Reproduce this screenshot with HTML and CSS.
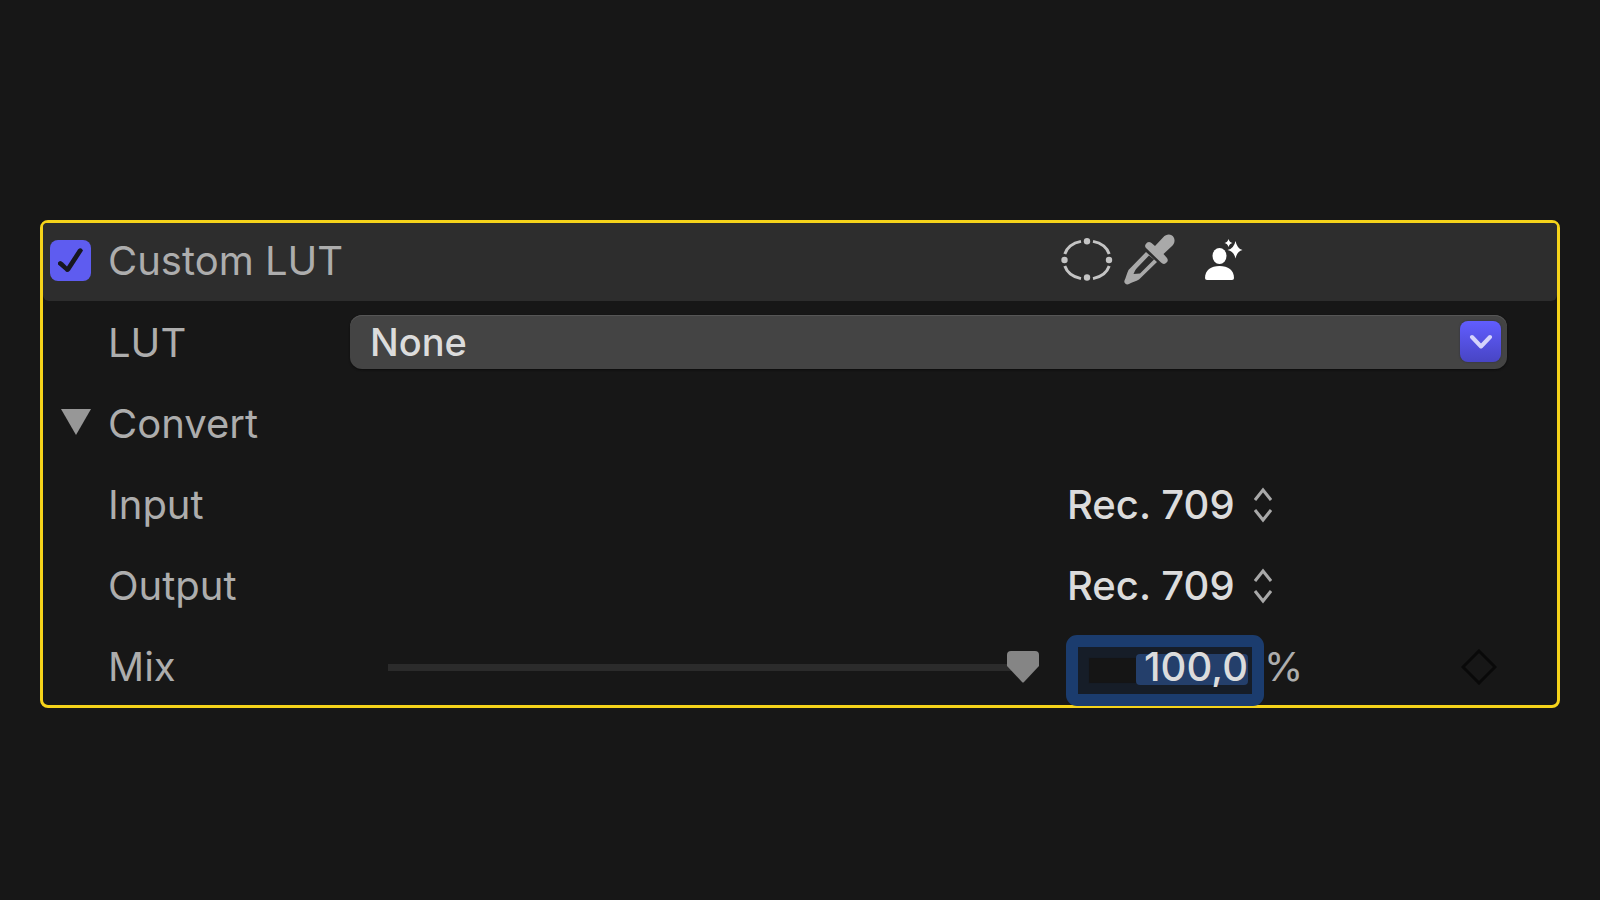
FILE: index.html
```
<!DOCTYPE html>
<html lang="en">
<head>
    <meta charset="utf-8">
    <title>Custom LUT</title>
    <link rel="stylesheet" href="styles.css">
</head>
<body>
    <div class="effect">
        <div class="row header">
            <input type="checkbox" id="enabled" checked>
            <label class="title" for="enabled">Custom LUT</label>
            <div class="tools">
                <button aria-label="Shape mask">
                    <svg width="52" height="44" viewBox="0 0 52 44" fill="none" stroke="#c4c4c4" stroke-width="3">
                        <path d="M20 3.4C12 5 6 9.5 3.8 16M32 3.4C40 5 46 9.5 48.2 16M3.8 28C6 34.500 12 39 20 40.600M48.2 28C46 34.500 40 39 32 40.600"/>
                        <g fill="#c4c4c4" stroke="none">
                            <circle cx="26" cy="3.300" r="3.200"/>
                            <circle cx="26" cy="39.500" r="3.200"/>
                            <circle cx="3.500" cy="22" r="3.200"/>
                            <circle cx="48" cy="22" r="3.200"/>
                        </g>
                    </svg>
                </button>
                <button aria-label="Color mask">
                    <svg width="52" height="52" viewBox="0 0 52 52" fill="#a9a9a9">
                        <path fill-rule="evenodd" d="M22 18L4.500 36C2.500 40 2 44 .5 46.500C-.5 49 2.500 51.500 5 50C8 48 12 47.500 15 45.500L33 28ZM25 21.500L13 34C11 36 10.500 38 9.500 40L16 39.500L30 25.500Z"/>
                        <path d="M21.500 10.500Q24 6.500 27.500 9L31 12L39 3.500C43 -1 48 .5 49.500 3C51.500 6 50.500 10 47.500 12.500L39.500 20L43 24Q45 27 42 29Q39.500 31 37 28.500L22 14Q20.500 12.500 21.500 10.500Z"/>
                    </svg>
                </button>
                <button class="person" aria-label="Magnetic mask">
                    <svg width="40" height="44" viewBox="0 0 40 44" fill="#fff">
                        <ellipse cx="14.500" cy="18" rx="7" ry="8"/>
                        <path d="M0 40C0 32 6 28 14.500 28S29 32 29 40Q29 42 27 42H2Q0 42 0 40Z"/>
                        <path d="M30.500 3Q32 10.500 37.500 12Q32 13.500 30.500 20.500Q29 13.500 22.500 12Q29 10.500 30.500 3Z"/>
                        <path d="M23.500 1Q24.500 4.500 27.500 5Q24.500 5.500 23.500 9Q22.500 5.500 19.500 5Q22.500 4.500 23.500 1Z"/>
                    </svg>
                </button>
            </div>
        </div>

        <div class="row">
            <label class="name" for="lut">LUT</label>
            <div class="popup">
                <select id="lut">
                    <option>None</option>
                </select>
                <span class="arrow">
                    <svg width="24" height="16" viewBox="0 0 24 16" fill="none" stroke="#d5d3fb" stroke-width="4" stroke-linecap="round" stroke-linejoin="round">
                        <path d="M3 4L12 13.500L21 4"/>
                    </svg>
                </span>
            </div>
        </div>

        <div class="row">
            <button class="disclosure" aria-label="Toggle Convert" aria-expanded="true">
                <svg width="30" height="26" viewBox="0 0 30 26" fill="#979797">
                    <path d="M0 0H30L15 26Z"/>
                </svg>
            </button>
            <span class="name">Convert</span>
        </div>

        <div class="row">
            <label class="name" for="input">Input</label>
            <div class="value">
                <select id="input">
                    <option>Rec. 709</option>
                </select>
                <svg width="18" height="36" viewBox="0 0 18 36" fill="none" stroke="#a8a8a8" stroke-width="3">
                    <path d="M1 13L9 3L17 13M1 23L9 33L17 23"/>
                </svg>
            </div>
        </div>

        <div class="row">
            <label class="name" for="output">Output</label>
            <div class="value">
                <select id="output">
                    <option>Rec. 709</option>
                </select>
                <svg width="18" height="36" viewBox="0 0 18 36" fill="none" stroke="#a8a8a8" stroke-width="3">
                    <path d="M1 13L9 3L17 13M1 23L9 33L17 23"/>
                </svg>
            </div>
        </div>

        <div class="row mix">
            <label class="name" for="mix">Mix</label>
            <input type="range" id="mix" min="0" max="100" value="100">
            <div class="value">
                <div class="field">
                    <input type="text" aria-label="Mix amount" value="100,0">
                </div>
                <span class="unit">%</span>
                <button class="keyframe" aria-label="Add keyframe">
                    <svg width="36" height="36" viewBox="0 0 36 36" fill="none" stroke="#090909" stroke-width="3">
                        <path d="M18 2L34 18L18 34L2 18Z"/>
                    </svg>
                </button>
            </div>
        </div>
    </div>
</body>
</html>
```

FILE: styles.css
```
* {
    box-sizing: border-box;
}

body {
    margin: 0;
    padding: 220px 40px 0;
    background-color: #171717;
    color: #adadad;
    font-family: Inter, "Liberation Sans", sans-serif;
    font-size: 40px;
    line-height: 48px;
}

button {
    display: flex;
    padding: 0;
    border: none;
    background: none;
    cursor: pointer;
}

svg {
    display: block;
}

.effect {
    border: 3px solid #f5d31a;
    border-radius: 8px;
}

/* gutter, name, control, value, right margin */
.row {
    display: grid;
    grid-template-columns: 65px 242px 1fr 440px 50px;
    align-items: center;
    height: 81px;
}

.header {
    height: 78px;
    margin-bottom: 1px;
    padding-bottom: 4px;
    background-color: #2d2d2d;
    border-radius: 4px 4px 6px 6px;
}

.name {
    grid-column: 2;
}

.title {
    grid-column: 2 / 4;
    padding-top: 2px;
}

input[type="checkbox"] {
    appearance: none;
    width: 41px;
    height: 41px;
    margin: 0 0 0 7px;
    border-radius: 8px;
    background-color: #5e5cf0;
}

input[type="checkbox"]:checked::before {
    content: "";
    display: block;
    width: 41px;
    height: 41px;
    background-color: #171720;
    clip-path: path("M8 23Q10 20 13 23L17 27L28 10Q31 7 33 11L20 31Q17 34 15 31L8 25Z");
}

.tools {
    grid-column: 4;
    display: flex;
    align-items: center;
    gap: 11px;
    margin-left: -6px;
}

.tools .person {
    margin-left: 18px;
}

select {
    appearance: none;
    border: none;
    background: none;
    color: #dcdcdc;
    font: inherit;
    font-weight: 500;
}

.popup {
    grid-column: 3 / 5;
    position: relative;
    margin-bottom: 2px;
}

.popup select {
    display: block;
    width: 100%;
    height: 54px;
    padding: 0 64px 0 20px;
    border-radius: 12px;
    background-color: #444;
    box-shadow: inset 0 1px 0 #565656, 0 1px 2px #0c0c0c;
    font-size: 38px;
}

.arrow {
    position: absolute;
    top: 6px;
    right: 6px;
    display: flex;
    align-items: center;
    justify-content: center;
    width: 41px;
    height: 41px;
    border-radius: 8px;
    background: linear-gradient(#615dff, #4845c4);
    box-shadow: 0 0 2px #2a2a40;
    pointer-events: none;
}

.disclosure {
    margin: 0 0 3px 18px;
}

.value {
    grid-column: 4;
    display: flex;
    align-items: center;
}

.value select {
    width: 187px;
    padding: 0;
}

.mix {
    height: 79px;
    padding-top: 2px;
}

input[type="range"] {
    appearance: none;
    height: 32px;
    margin: 0 28px 0 38px;
    background: linear-gradient(#2b2b2b, #2b2b2b) left center / calc(100% - 16px) 7px no-repeat;
}

input[type="range"]::-webkit-slider-thumb {
    appearance: none;
    width: 32px;
    height: 32px;
    background-color: #858585;
    clip-path: path("M4 0H28Q32 0 32 4V15L17 31Q16 32 15 31L0 15V4Q0 0 4 0Z");
}

.field {
    position: relative;
    width: 198px;
    height: 71px;
    margin: 7px 0 0 -1px;
    border: 12px solid #1b3c6e;
    border-radius: 11px;
    background-color: #151515;
    box-shadow: inset 0 0 1px 11px #161d28;
}

/* highlight behind the selected number */
.field::before {
    content: "";
    position: absolute;
    top: 7px;
    right: 4px;
    width: 112px;
    height: 31px;
    border-radius: 4px;
    background-color: #243f6b;
}

.field input {
    position: relative;
    display: block;
    width: 100%;
    height: 40px;
    padding: 0 4px 0 0;
    border: none;
    outline: none;
    background: none;
    color: #dcdcdc;
    font: inherit;
    font-weight: 500;
    text-align: right;
}

.keyframe {
    margin-left: auto;
    margin-right: 10px;
}
```
